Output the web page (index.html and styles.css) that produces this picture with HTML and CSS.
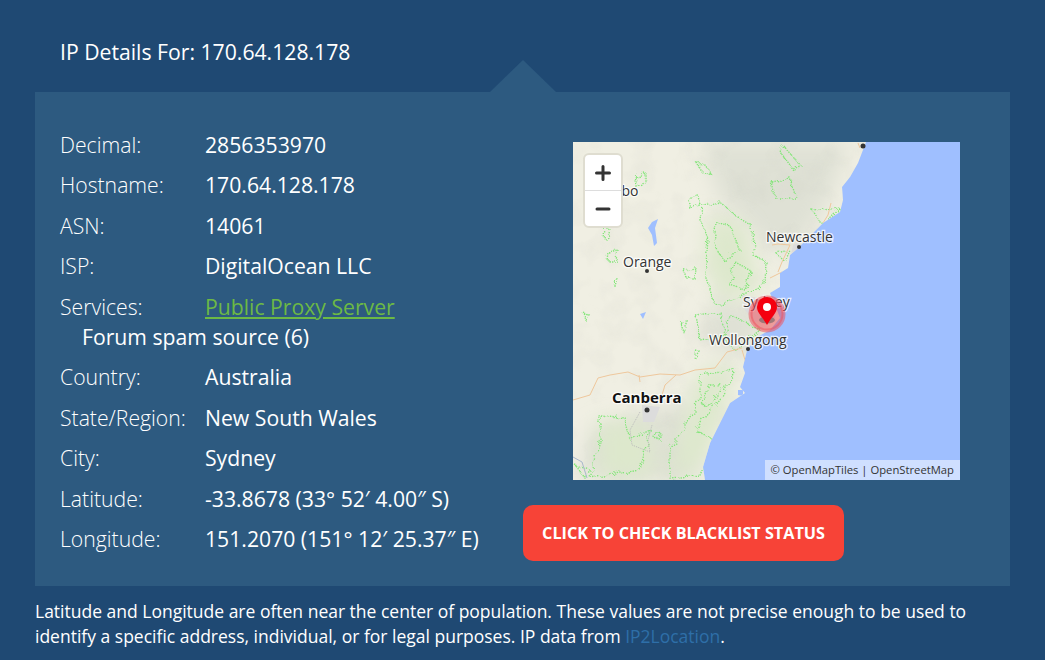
FILE: index.html
```html
<!DOCTYPE html>
<html lang="en">
<head>
    <meta charset="UTF-8">
    <title>IP Details</title>
    <link rel="stylesheet" href="styles.css">
</head>
<body>

<h2 class="title">IP Details For: 170.64.128.178</h2>

<div class="panel">
    <div class="arrow"></div>

    <div class="details">
        <div class="row"><span class="label">Decimal:</span><span>2856353970</span></div>
        <div class="row"><span class="label">Hostname:</span><span>170.64.128.178</span></div>
        <div class="row"><span class="label">ASN:</span><span>14061</span></div>
        <div class="row"><span class="label">ISP:</span><span>DigitalOcean LLC</span></div>
        <div class="row services">
            <div class="service_line"><span class="label">Services:</span><a class="green" href="#">Public Proxy Server</a></div>
            <div class="service_extra">Forum spam source (6)</div>
        </div>
        <div class="row"><span class="label">Country:</span><span>Australia</span></div>
        <div class="row"><span class="label">State/Region:</span><span>New South Wales</span></div>
        <div class="row"><span class="label">City:</span><span>Sydney</span></div>
        <div class="row"><span class="label">Latitude:</span><span>-33.8678 (33° 52′ 4.00″ S)</span></div>
        <div class="row"><span class="label">Longitude:</span><span>151.2070 (151° 12′ 25.37″ E)</span></div>
    </div>

    <div class="side">
        <div class="map">
            <svg class="map_svg" viewBox="573 142 387 338" width="387" height="338">
                <defs>
                    <filter id="soft"><feGaussianBlur stdDeviation="10"/></filter>
                    <filter id="terrain" x="0" y="0" width="100%" height="100%">
                        <feTurbulence type="fractalNoise" baseFrequency="0.035" numOctaves="3" seed="4"/>
                        <feColorMatrix values="0 0 0 0 0.55  0 0 0 0 0.56  0 0 0 0 0.5  1.6 0 0 0 -0.72"/>
                    </filter>
                    <filter id="wiggle" x="-10%" y="-10%" width="120%" height="120%">
                        <feTurbulence type="fractalNoise" baseFrequency="0.12" numOctaves="2" seed="7" result="n"/>
                        <feDisplacementMap in="SourceGraphic" in2="n" scale="8"/>
                    </filter>
                    <clipPath id="land_clip">
                        <path d="M573 142H866L858 163 850 177 842 187 843 200 840 212 823 223 813 233 798 248 790 255 788 268 780 273 780 287 770 293 775 305 780 318 770 330 757 337 747 350 743 367 745 373 740 387 745 393 730 403 723 417 710 443 703 467 705 480H573Z"/>
                    </clipPath>
                </defs>
                <rect x="573" y="142" width="387" height="338" fill="#9fbfff"/>
                <g clip-path="url(#land_clip)">
                    <rect x="573" y="142" width="387" height="338" fill="#f0efe3"/>
                    <!-- hill shade -->
                    <g filter="url(#soft)" fill="#dfe1d5">
                        <path d="M700 142H850L830 200 790 260 760 240 720 200Z"/>
                        <path d="M720 290L770 320 740 360 700 340Z"/>
                        <path d="M590 430L690 400 700 480H580Z"/>
                    </g>
                    <rect x="573" y="142" width="387" height="338" filter="url(#terrain)" opacity="0.22"/>
                    <!-- forest tint -->
                    <g filter="url(#soft)" fill="#dde8cc">
                        <path d="M708 215L745 225 760 290 725 300 705 270Z"/>
                        <path d="M600 420L650 425 655 475 600 478Z"/>
                        <path d="M700 370L735 365 715 440 690 478 670 470Z"/>
                    </g>
                    <!-- city areas -->
                    <g fill="#dcdcdc">
                        <path d="M742 295L770 300 775 318 755 322 745 310Z"/>
                        <path d="M642 405L660 407 654 422 643 422Z"/>
                        <path d="M793 245L799 243 797 256 791 255Z"/>
                    </g>
                    <!-- forest outlines -->
                    <g filter="url(#wiggle)" fill="none" stroke="#84e67a" stroke-width="1.4" stroke-dasharray="1.4 1.1">
                        <path d="M697 163L705 165 712 175 702 172Z"/>
                        <path d="M688 199L698 196 700 205 690 208Z"/>
                        <path d="M635 176L646 174 646 184 637 187Z"/>
                        <path d="M702 205L720 202 735 215 752 225 753 255 766 262 765 285 735 300 715 305 705 275 708 240 700 220Z"/>
                        <path d="M716 222L730 226 740 250 725 262 714 245Z"/>
                        <path d="M735 262L750 270 745 290 730 285Z"/>
                        <path d="M605 228L610 230 607 240 604 238Z"/>
                        <path d="M608 252L618 250 616 260 607 260Z"/>
                        <path d="M612 278L617 278 615 286Z"/>
                        <path d="M684 270L695 268 694 278 686 278Z"/>
                        <path d="M783 145L800 165 795 172 780 152Z"/>
                        <path d="M772 182L790 178 796 198 775 198Z"/>
                        <path d="M813 211L840 208 825 225 820 222Z"/>
                        <path d="M776 253L790 250 785 262Z"/>
                        <path d="M583 312L590 316 586 320Z"/>
                        <path d="M680 322L688 322 684 332Z"/>
                        <path d="M695 315L720 312 725 335 700 340Z"/>
                        <path d="M695 350L700 352 695 360Z"/>
                        <path d="M730 315L760 330 735 350 725 340Z"/>
                        <path d="M700 375L735 370 720 400 695 430 715 440 700 475 670 478 670 450 700 400Z"/>
                        <path d="M710 385L722 385 712 405 702 405Z"/>
                        <path d="M600 415L625 418 630 440 650 430 640 470 590 478 600 445Z"/>
                        <path d="M655 432L662 434 660 440 654 438Z"/>
                        <path d="M575 465L590 470 585 478Z"/>
                    </g>
                    <!-- roads -->
                    <g fill="none" stroke="#eec79c" stroke-width="1">
                        <path d="M573 400L590 395 598 378 610 375 628 372 640 377 660 374 680 375 695 370 715 368 727 352 742 348"/>
                        <path d="M639 375L640 382"/>
                        <path d="M676 375L665 385 662 395"/>
                        <path d="M742 350L745 360 746 372"/>
                        <path d="M770 278L782 272"/>
                        <path d="M772 245L778 244 790 245 782 262 778 272"/>
                        <path d="M823 223L828 215 831 203"/>
                        <path d="M858 143L860 148"/>
                    </g>
                    <path fill="none" stroke="#bbb" stroke-dasharray="1 1" d="M640 412L630 430 632 445 650 452 648 440 652 425"/>
                    <path fill="none" stroke="#a9b8cc" d="M573 457L582 462 587 478"/>
                    <!-- water -->
                    <path fill="#9fbfff" d="M652 222L658 219 655 228 657 243 654 246 652 235 648 228Z"/>
                    <path fill="#9fbfff" d="M640 314L646 312 643 319Z"/>
                    <path fill="#9fbfff" d="M738 390L743 390 743 396 738 395Z"/>
                </g>
                <!-- labels -->
                <g class="places">
                    <circle cx="863" cy="146" r="2.5"/>
                    <circle cx="647" cy="271" r="2"/>
                    <circle cx="799" cy="247" r="2"/>
                    <circle cx="748" cy="349" r="2"/>
                    <circle cx="647" cy="410" r="2.5"/>
                    <text x="613" y="196">obo</text>
                    <text x="623" y="267">Orange</text>
                    <text x="766" y="242">Newcastle</text>
                    <text x="743" y="307">Sydney</text>
                    <text x="709" y="345">Wollongong</text>
                    <text class="capital" x="612" y="403">Canberra</text>
                </g>
                <!-- marker -->
                <circle cx="767" cy="314" r="16.5" fill="#f03a45" fill-opacity="0.45" stroke="#ef5560" stroke-opacity="0.55" stroke-width="4"/>
                <ellipse cx="767" cy="320" rx="8" ry="3.5" fill="#555" opacity="0.5"/>
                <path fill="#f5000f" d="M767 325C762 316 757 313 757 307A10 10 0 0 1 777 307C777 313 772 316 767 325Z"/>
                <circle cx="767" cy="307" r="4" fill="#fff"/>
            </svg>
            <div class="zoom_box">
                <div class="zoom_btn">
                    <svg width="16" height="16" viewBox="0 0 16 16"><path d="M8 1.5v13M1.5 8h13" stroke="#333" stroke-width="3" stroke-linecap="round"/></svg>
                </div>
                <div class="zoom_btn zoom_out">
                    <svg width="16" height="16" viewBox="0 0 16 16"><path d="M2 8h12" stroke="#333" stroke-width="3" stroke-linecap="round"/></svg>
                </div>
            </div>
            <div class="attrib">© OpenMapTiles | OpenStreetMap</div>
        </div>
        <a class="btn" href="#">Click to check blacklist status</a>
    </div>
</div>

<p class="note">Latitude and Longitude are often near the center of population. These values are not precise enough to be used to identify a specific address, individual, or for legal purposes. IP data from <a href="#">IP2Location</a>.</p>

</body>
</html>
```

FILE: styles.css
```css
*{
    margin: 0;
    padding: 0;
    box-sizing: border-box;
}
body{
    background-color: #1f4973;
    color: #fff;
    font-family: "Open Sans", "Liberation Sans", sans-serif;
    height: 660px;
    overflow: hidden;
    padding: 0 35px;
}
.title{
    font-size: 21.2px;
    font-weight: 400;
    line-height: 30px;
    padding: 37px 0 25px 25px;
}
.panel{
    width: 975px;
    height: 494px;
    background-color: #2d5a80;
    position: relative;
    display: flex;
    padding: 38px 0 0 25px;
}
.arrow{
    position: absolute;
    left: 455px;
    top: -32px;
    width: 66px;
    height: 32px;
    background-color: #2d5a80;
    clip-path: polygon(50% 0, 100% 100%, 0 100%);
}
.details{
    width: 463px;
    font-size: 21.2px;
    line-height: 30.4px;
}
.row{
    display: flex;
    padding-bottom: 10px;
}
.services{
    display: block;
}
.service_line{
    display: flex;
}
.service_extra{
    padding-left: 22px;
}
.label{
    width: 145px;
    flex: none;
    font-weight: 300;
}
.green{
    color: #6cb945;
}
.side{
    padding-top: 12px;
}
.map{
    width: 387px;
    height: 338px;
    margin-left: 50px;
    position: relative;
    overflow: hidden;
}
.map_svg{
    display: block;
}
.places text{
    font-family: "Open Sans", sans-serif;
    font-size: 14px;
    fill: #333;
    stroke: #fff;
    stroke-opacity: 0.75;
    stroke-width: 2.5px;
    paint-order: stroke;
}
.places .capital{
    font-weight: 700;
    font-size: 15px;
    fill: #111;
}
.places circle{
    fill: #333;
}
.zoom_box{
    position: absolute;
    left: 10px;
    top: 11px;
    width: 40px;
    background-color: #fff;
    border: 2px solid #dfddd0;
    border-radius: 6px;
}
.zoom_btn{
    height: 35px;
    display: flex;
    align-items: center;
    justify-content: center;
}
.zoom_out{
    height: 36px;
    border-top: 1px solid #ddd;
}
.attrib{
    position: absolute;
    right: 0;
    bottom: 0;
    background-color: rgba(255,255,255,0.5);
    color: #333;
    font-size: 11.25px;
    line-height: 20px;
    padding: 0 6px;
}
.btn{
    display: block;
    width: 321px;
    height: 56px;
    margin-top: 25px;
    background-color: #f74337;
    border-radius: 10px;
    color: #fff;
    font-size: 16.2px;
    font-weight: 700;
    line-height: 56px;
    text-align: center;
    text-transform: uppercase;
    text-decoration: none;
}
.note{
    font-size: 17.5px;
    line-height: 25px;
    padding-top: 13px;
    width: 960px;
}
.note a{
    color: #2e6fa8;
    text-decoration: none;
}
```
